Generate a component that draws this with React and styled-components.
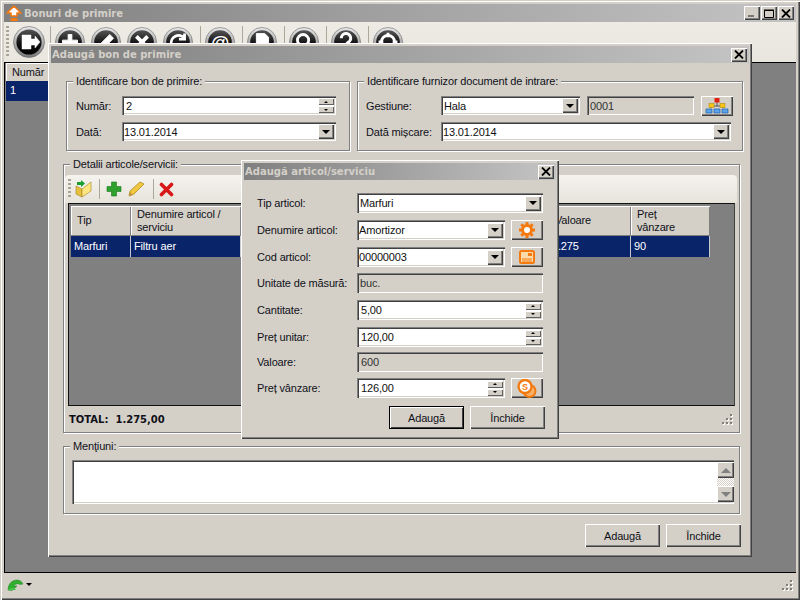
import React from 'react';
import styled, { createGlobalStyle } from 'styled-components';

const Global = createGlobalStyle`
  html, body { margin: 0; padding: 0; background: #d4d0c8; }
  * { box-sizing: border-box; }
  body { font-family: "Liberation Sans", Arial, sans-serif; font-size: 11px; letter-spacing: -0.15px; color: #101018; }
`;

const raised = `box-shadow: inset 1px 1px 0 #fff, inset -1px -1px 0 #404040, inset -2px -2px 0 #808080;`;
const sunken = `box-shadow: inset 1px 1px 0 #808080, inset 2px 2px 0 #404040, inset -1px -1px 0 #fff, inset -2px -2px 0 #d4d0c8;`;

const Shell = styled.div`
  position: relative; width: 800px; height: 600px; overflow: hidden; background: #d4d0c8;
  padding: 4px; display: flex; flex-direction: column;
  box-shadow: inset 1px 1px 0 #d4d0c8, inset 2px 2px 0 #fff, inset -1px -1px 0 #404040, inset -2px -2px 0 #808080;
`;
const TitleBar = styled.div`
  flex: none; height: ${p => p.$h}px; display: flex; align-items: center; padding: 0 2px 0 ${p => p.$pl}px;
  background: linear-gradient(90deg, #808080, #c4c4c4);
`;
const TitleText = styled.div`
  flex: 1; font: bold 10px "DejaVu Sans", sans-serif; letter-spacing: 0; color: #d4d0c8; white-space: nowrap;
`;
const CaptionButton = styled.div`
  width: 16px; height: 14px; flex: none; margin-left: 1px; background: #d4d0c8; ${raised}
  display: flex; align-items: center; justify-content: center;
`;
const Toolbar = styled.div`
  flex: none; height: 40px; display: flex; align-items: center; padding-left: 2px;
  background: linear-gradient(180deg, #eeebe5, #e9e6de);
`;
const Grip = styled.div`
  width: 3px; height: ${p => p.$h}px; flex: none;
  background: repeating-linear-gradient(180deg, #a8a498 0 2px, transparent 2px 4px);
`;
const Sep = styled.div`
  width: 1px; height: ${p => p.$h}px; flex: none; background: #aca899; margin: ${p => p.$m};
`;
const Client = styled.div`
  flex: 1; background: #808080; border-top: 1px solid #000; border-left: 1px solid #000; border-bottom: 1px solid #000;
  padding-left: 1px;
`;
const ListHead = styled.div`
  width: 60px; height: 18px; padding: 3px 0 0 6px; background: #d4d0c8;
  box-shadow: inset 1px 1px 0 #fff;
`;
const ListRow = styled.div`
  width: 60px; height: 20px; padding: 3px 0 0 4px; background: #0a246a; color: #fff;
`;
const StatusBar = styled.div`
  flex: none; height: 23px; display: flex; align-items: center; justify-content: space-between; padding: 0 3px;
`;
const StatusMenu = styled.div`
  display: flex; align-items: center; gap: 2px;
`;
const Dialog = styled.div`
  position: absolute; left: ${p => p.$x}px; top: ${p => p.$y}px; width: ${p => p.$w}px; height: ${p => p.$h}px;
  padding: 3px; background: #d4d0c8; display: flex; flex-direction: column;
  box-shadow: inset 1px 1px 0 #fff, inset -1px -1px 0 #404040, inset -2px -2px 0 #808080;
`;
const TopRow = styled.div`
  display: flex; gap: 7px; margin: 18px 0 0 15px;
`;
const Group = styled.div`
  position: relative; flex: none; width: ${p => p.$w}px; height: ${p => p.$h}px; margin: ${p => p.$m || 0};
  border: 1px solid #808080; padding: ${p => p.$pad};
  box-shadow: inset 1px 1px 0 #fff, 1px 1px 0 #fff;
`;
const Legend = styled.span`
  position: absolute; left: 6px; top: -7px; padding: 0 3px; background: #d4d0c8; white-space: nowrap;
`;
const FormRow = styled.div`
  display: flex; align-items: center; height: 19px; margin-bottom: 7px;
`;
const InlineLabel = styled.div`
  flex: none; width: ${p => p.$w}px; white-space: nowrap;
`;
const Field = styled.div`
  flex: ${p => p.$w ? 'none' : 1}; width: ${p => p.$w ? p.$w + 'px' : 'auto'}; height: 19px; min-width: 0;
  margin-left: ${p => p.$ml || 0}px;
  display: flex; align-items: center; justify-content: space-between;
  background: ${p => p.$ro ? '#d4d0c8' : '#fff'}; color: ${p => p.$ro ? '#333' : '#111'};
  padding: 0 2px 0 ${p => p.$pl ?? 4}px; ${sunken}
`;
const ArrowBtn = styled.div`
  flex: none; width: 16px; height: 15px; background: #d4d0c8; ${raised}
  display: flex; align-items: center; justify-content: center;
`;
const Tri = styled.div`
  width: 0; height: 0; border-left: ${p => p.$s}px solid transparent; border-right: ${p => p.$s}px solid transparent;
  ${p => p.$up ? `border-bottom: ${p.$s}px solid ${p.$c || '#000'};` : `border-top: ${p.$s}px solid ${p.$c || '#000'};`}
`;
const SpinBox = styled.div`
  flex: none; width: 16px; height: 15px; display: flex; flex-direction: column; gap: 1px;
`;
const SpinBtn = styled.div`
  flex: 1; background: #d4d0c8; display: flex; align-items: center; justify-content: center;
  box-shadow: inset 1px 1px 0 #fff, inset -1px -1px 0 #606060;
`;
const IconBtn = styled.div`
  flex: none; width: 32px; height: 20px; margin-left: ${p => p.$ml || 0}px; background: #d4d0c8; ${raised}
  display: flex; align-items: center; justify-content: center;
`;
const InnerBar = styled.div`
  height: 28px; margin: 10px 2px 0 1px; display: flex; align-items: center; padding-left: 3px;
  border-radius: 4px 4px 0 0; background: linear-gradient(180deg, #f5f3ee, #e6e3da);
`;
const GridBox = styled.div`
  height: 203px; margin: 0 4px; background: #808080; padding: 2px 0 0 2px;
  border-top: 1px solid #111; border-left: 1px solid #111; border-right: 1px solid #404040; border-bottom: 1px solid #111;
`;
const GridRow = styled.div`
  display: grid; grid-template-columns: 60px 110px 150px 158px 82px 79px; width: 639px; margin-bottom: 1px;
  height: ${p => p.$h}px;
`;
const HeadCell = styled.div`
  background: #d4d0c8; padding: 0 4px 0 6px; display: flex; align-items: center; line-height: 13px;
  box-shadow: inset 1px 1px 0 #fff, inset -1px 0 0 #808080;
`;
const DataCell = styled.div`
  background: #0a246a; color: #fff; padding: 4px 0 0 3px; border-right: 1px solid #c8c8d0; white-space: nowrap;
`;
const TotalBar = styled.div`
  height: 26px; margin: 0 3px; display: flex; align-items: center; justify-content: space-between;
  padding: 0 3px 0 2px; font: bold 10px "DejaVu Sans", sans-serif; letter-spacing: 0; color: #101018; white-space: pre;
`;
const MemoRow = styled.div`
  height: 44px; margin: 13px 5px 0 8px; display: flex; background: #fff; ${sunken}
`;
const MemoText = styled.div` flex: 1; `;
const ScrollBar = styled.div`
  flex: none; width: 17px; margin: 2px 0; display: flex; flex-direction: column;
  background: repeating-conic-gradient(#d4d0c8 0 25%, #fff 0 50%) 0 0 / 2px 2px;
`;
const ScrollBtn = styled.div`
  height: 16px; background: #d4d0c8; ${raised} display: flex; align-items: center; justify-content: center;
`;
const Spacer = styled.div` flex: 1; `;
const Footer = styled.div`
  display: flex; justify-content: flex-end; gap: 6px; margin: ${p => p.$m};
`;
const Button = styled.div`
  width: 75px; height: 23px; display: flex; align-items: center; justify-content: center; background: #d4d0c8;
  ${p => p.$def
    ? `border: 1px solid #000; box-shadow: inset 1px 1px 0 #fff, inset -1px -1px 0 #404040;`
    : `box-shadow: inset 1px 1px 0 #fff, inset -1px -1px 0 #404040, inset -2px -2px 0 #808080;`}
`;
const ArticleForm = styled.div`
  display: grid; grid-template-columns: 100px 186px; margin: 13px 0 0 13px;
  grid-template-rows: 27px 27px 26px 27px 27px 25px 26px 28px; align-items: start;
`;
const ArticleLabel = styled.div` height: 20px; display: flex; align-items: center; white-space: nowrap; `;
const Cell = styled.div`
  display: flex; justify-content: space-between; align-items: center; height: 20px;
  ${Field} { height: 20px; }
`;

const Sphere = ({ children, size = 30, mx = 3 }) => (
  <svg width={size} height={size} viewBox="0 0 32 32" style={{ flex: 'none', margin: `0 ${mx}px` }}>
    <defs>
      <linearGradient id="ring" x1="0" y1="0" x2="0" y2="1">
        <stop offset="0" stopColor="#e8e8e8" /><stop offset="1" stopColor="#777" />
      </linearGradient>
      <linearGradient id="core" x1="0" y1="0" x2="0" y2="1">
        <stop offset="0" stopColor="#555" /><stop offset=".55" stopColor="#111" /><stop offset="1" stopColor="#000" />
      </linearGradient>
    </defs>
    <circle cx="16" cy="16" r="15.5" fill="url(#ring)" stroke="#666" strokeWidth=".6" />
    <circle cx="16" cy="16" r="12.6" fill="url(#core)" />
    {children}
  </svg>
);

const Close = () => (
  <svg width="10" height="9" viewBox="0 0 10 9"><path d="M1 0.5 9 8.5M9 0.5 1 8.5" stroke="#000" strokeWidth="1.8" /></svg>
);

const Combo = ({ children, w, pl = 3 }) => (
  <Field $w={w} $pl={pl}>{children}<ArrowBtn><Tri $s={4} /></ArrowBtn></Field>
);
const Spin = ({ children, w }) => (
  <Field $w={w}>{children}
    <SpinBox>
      <SpinBtn><Tri $s={2} $up /></SpinBtn>
      <SpinBtn><Tri $s={2} /></SpinBtn>
    </SpinBox>
  </Field>
);

const GearIcon = () => (
  <svg width="18" height="18" viewBox="0 0 18 18">
    <g stroke="#f47a10" strokeWidth="3">
      <path d="M9 1V17M1 9H17M3.3 3.3 14.7 14.7M14.7 3.3 3.3 14.7" />
    </g>
    <circle cx="9" cy="9" r="6" fill="#f47a10" />
    <circle cx="9" cy="9" r="3" fill="#fff" />
  </svg>
);
const CardIcon = () => (
  <svg width="18" height="16" viewBox="0 0 18 16">
    <rect x="1" y="1" width="16" height="14" rx="2.5" fill="#f47a10" />
    <rect x="3" y="3" width="12" height="10" fill="#fbd9a8" />
    <path d="M4 10H14M4 12H14" stroke="#f47a10" />
    <rect x="10" y="4" width="4" height="3" fill="#f47a10" />
  </svg>
);
const CoinIcon = () => (
  <svg width="20" height="19" viewBox="0 0 20 19">
    <circle cx="12.5" cy="12" r="6" fill="#f9b26a" stroke="#f47a10" strokeWidth="2" />
    <circle cx="8" cy="7.5" r="6.5" fill="#fff" stroke="#f47a10" strokeWidth="2.4" />
    <text x="8" y="11" textAnchor="middle" fontSize="9" fontWeight="bold" fill="#f47a10" fontFamily="Liberation Sans">S</text>
  </svg>
);
const OrgIcon = () => (
  <svg width="24" height="16" viewBox="0 0 24 16">
    <path d="M12 3V8M6 8H18M6 8V10M18 8V10" stroke="#555" fill="none" />
    <rect x="9.5" y="0" width="5" height="4.5" fill="#e02010" />
    <rect x="4" y="5.5" width="5" height="4" fill="#f5c518" stroke="#b08000" strokeWidth=".5" />
    <rect x="15" y="5.5" width="5" height="4" fill="#f5c518" stroke="#b08000" strokeWidth=".5" />
    <path d="M1 11H7V15H1ZM9 11H15V15H9ZM17 11H23V15H17Z" fill="#5ba4e6" stroke="#1c5fb0" strokeWidth=".7" />
  </svg>
);
const FolderIcon = () => (
  <svg width="18" height="18" viewBox="0 0 18 18" style={{ margin: '0 6px 0 4px' }}>
    <path d="M1 6 7 9V17L1 14Z" fill="#e8c040" stroke="#a08020" strokeWidth=".6" />
    <path d="M7 9 16 2V11L7 17Z" fill="#ffe680" stroke="#a08020" strokeWidth=".6" />
    <path d="M2 2 6 2 6 0 10 3.5 6 7 6 5 2 5Z" fill="#18a030" />
  </svg>
);
const PlusIcon = () => (
  <svg width="16" height="16" viewBox="0 0 16 16" style={{ margin: '0 6px' }}>
    <path d="M5.5 1H10.5V5.5H15V10.5H10.5V15H5.5V10.5H1V5.5H5.5Z" fill="#2ea02e" stroke="#1a7a1a" strokeWidth=".6" />
  </svg>
);
const PencilIcon = () => (
  <svg width="17" height="16" viewBox="0 0 17 16" style={{ marginRight: 8 }}>
    <path d="M1 15 2 10 12 1 16 3 6 13Z" fill="#f0c840" stroke="#b08a20" strokeWidth=".8" />
    <path d="M1 15 2 11 5 14Z" fill="#c09040" />
  </svg>
);
const RedX = () => (
  <svg width="15" height="15" viewBox="0 0 15 15" style={{ margin: '0 0 0 5px' }}>
    <path d="M2.5 2.5 12.5 12.5M12.5 2.5 2.5 12.5" stroke="#d81818" strokeWidth="3.6" strokeLinecap="round" />
  </svg>
);
const GreenArrow = () => (
  <svg width="17" height="12" viewBox="0 0 17 12">
    <path d="M1 11C1 5 5 1 10 1C13 1 15 3 16 5L13 5.5C11 4 8 5 7 7L10 7 5 11.5Z" fill="#2fae2f" stroke="#1c801c" strokeWidth=".5" />
    <path d="M1 11C4 8 8 9 9 11Z" fill="#46c846" />
  </svg>
);
const Dots = () => (
  <svg width="12" height="12" viewBox="0 0 12 12">
    {[[9, 1], [5, 5], [9, 5], [1, 9], [5, 9], [9, 9]].map(([x, y]) => (
      <g key={`${x}${y}`}>
        <rect x={x + 1} y={y + 1} width="2" height="2" fill="#fff" />
        <rect x={x} y={y} width="2" height="2" fill="#808078" />
      </g>
    ))}
  </svg>
);

export default function App() {
  const w = { fill: '#fff', stroke: '#fff' };
  return (
    <>
      <Global />
      <Shell>
        <TitleBar $h={18} $pl={2}>
          <svg width="16" height="17" viewBox="0 0 16 17" style={{ flex: 'none', marginRight: 2 }}>
            <path d="M8 1 15 8H11V11H5V8H1Z" fill="#fff" stroke="#f47a10" strokeWidth="1.6" strokeLinejoin="round" />
            <path d="M4.5 13H11.5V16H4.5Z" fill="#f47a10" />
          </svg>
          <TitleText>Bonuri de primire</TitleText>
          <CaptionButton><svg width="8" height="8" viewBox="0 0 8 8"><path d="M0 7H6" stroke="#777" strokeWidth="2" /></svg></CaptionButton>
          <CaptionButton><svg width="10" height="9" viewBox="0 0 10 9"><path d="M.5 1.5H9.5V8.5H.5Z" fill="none" stroke="#000" /><path d="M0 1H10" stroke="#000" /></svg></CaptionButton>
          <CaptionButton><Close /></CaptionButton>
        </TitleBar>
        <Toolbar>
          <Grip $h={32} />
          <Sphere size={32} mx={4}>
            <path d="M9 9H18V13H22V10L27 16 22 22V19H18V23H9Z" {...w} strokeWidth=".5" />
          </Sphere>
          <Sep $h={32} $m="0 1px" />
          <Sphere><path d="M14 8H18V14H24V18H18V24H14V18H8V14H14Z" {...w} /></Sphere>
          <Sphere><path d="M9 23 11 17 20 8 24 12 15 21Z" {...w} /></Sphere>
          <Sphere><path d="M10 10 22 22M22 10 10 22" stroke="#fff" strokeWidth="4" /></Sphere>
          <Sphere><path d="M9 19A8 8 0 0 1 23 12M23 7V13H17" fill="none" stroke="#fff" strokeWidth="3" /></Sphere>
          <Sep $h={32} $m="0 1px 0 4px" />
          <Sphere><text x="16" y="23" textAnchor="middle" fontSize="20" fontWeight="bold" fill="#fff" fontFamily="Liberation Sans">@</text></Sphere>
          <Sep $h={32} $m="0 1px 0 4px" />
          <Sphere><path d="M10 7H19L23 11V25H10Z" {...w} /></Sphere>
          <Sep $h={32} $m="0 1px 0 4px" />
          <Sphere><circle cx="15" cy="14" r="6" fill="none" stroke="#fff" strokeWidth="3" /><path d="M19 19 24 24" stroke="#fff" strokeWidth="3" /></Sphere>
          <Sep $h={32} $m="0 1px 0 4px" />
          <Sphere><path d="M11 12A5 5 0 1 1 18 16.5C16.5 17.5 16 18 16 20M16 22V25" fill="none" stroke="#fff" strokeWidth="3.2" /></Sphere>
          <Sep $h={32} $m="0 1px 0 4px" />
          <Sphere><circle cx="16" cy="16" r="7" fill="none" stroke="#fff" strokeWidth="3" /><path d="M16 6V11M16 21V26M6 16H11M21 16H26" stroke="#fff" strokeWidth="3" /></Sphere>
        </Toolbar>
        <Client>
          <ListHead>Număr</ListHead>
          <ListRow>1</ListRow>
        </Client>
        <StatusBar>
          <StatusMenu>
            <GreenArrow />
            <Tri $s={3} />
          </StatusMenu>
          <Dots />
        </StatusBar>

        <Dialog $x={48} $y={43} $w={704} $h={514}>
          <TitleBar $h={17} $pl={1}>
            <TitleText>Adaugă bon de primire</TitleText>
            <CaptionButton><Close /></CaptionButton>
          </TitleBar>
          <TopRow>
            <Group $w={284} $h={70} $pad="14px 13px 0 9px">
              <Legend>Identificare bon de primire:</Legend>
              <FormRow><InlineLabel $w={46}>Număr:</InlineLabel><Spin>2</Spin></FormRow>
              <FormRow><InlineLabel $w={46}>Dată:</InlineLabel><Combo pl={2}>13.01.2014</Combo></FormRow>
            </Group>
            <Group $w={386} $h={70} $pad="14px 10px 0 8px">
              <Legend>Identificare furnizor document de intrare:</Legend>
              <FormRow>
                <InlineLabel $w={75}>Gestiune:</InlineLabel>
                <Combo w={139}>Hala</Combo>
                <Field $ro $w={107} $pl={3} $ml={7}>0001</Field>
                <IconBtn $ml={7}><OrgIcon /></IconBtn>
              </FormRow>
              <FormRow>
                <InlineLabel $w={75}>Dată mișcare:</InlineLabel>
                <Combo w={290} pl={2}>13.01.2014</Combo>
              </FormRow>
            </Group>
          </TopRow>
          <Group $w={677} $h={269} $m="13px 0 0 12px">
            <Legend>Detalii articole/servicii:</Legend>
            <InnerBar>
              <Grip $h={20} />
              <FolderIcon />
              <Sep $h={20} />
              <PlusIcon />
              <PencilIcon />
              <Sep $h={20} />
              <RedX />
            </InnerBar>
            <GridBox>
              <GridRow $h={29}>
                <HeadCell>Tip</HeadCell>
                <HeadCell>Denumire articol / serviciu</HeadCell>
                <HeadCell>Cantitate</HeadCell>
                <HeadCell>Preț unitar</HeadCell>
                <HeadCell>Valoare</HeadCell>
                <HeadCell>Preț<br />vânzare</HeadCell>
              </GridRow>
              <GridRow $h={21}>
                <DataCell>Marfuri</DataCell>
                <DataCell>Filtru aer</DataCell>
                <DataCell>5</DataCell>
                <DataCell>255</DataCell>
                <DataCell>1.275</DataCell>
                <DataCell>90</DataCell>
              </GridRow>
            </GridBox>
            <TotalBar>TOTAL:  1.275,00<Dots /></TotalBar>
          </Group>
          <Group $w={677} $h={68} $m="13px 0 0 12px">
            <Legend>Menţiuni:</Legend>
            <MemoRow>
              <MemoText />
              <ScrollBar>
                <ScrollBtn><Tri $s={5} $up $c="#808080" /></ScrollBtn>
                <Spacer />
                <ScrollBtn><Tri $s={5} $c="#808080" /></ScrollBtn>
              </ScrollBar>
            </MemoRow>
          </Group>
          <Footer $m="10px 8px 0 0">
            <Button>Adaugă</Button>
            <Button>Închide</Button>
          </Footer>
        </Dialog>

        <Dialog $x={241} $y={160} $w={318} $h={279}>
          <TitleBar $h={17} $pl={1}>
            <TitleText>Adaugă articol/serviciu</TitleText>
            <CaptionButton><Close /></CaptionButton>
          </TitleBar>
          <ArticleForm>
            <ArticleLabel>Tip articol:</ArticleLabel>
            <Cell><Combo w={186}>Marfuri</Combo></Cell>
            <ArticleLabel>Denumire articol:</ArticleLabel>
            <Cell><Combo w={148} pl={2}>Amortizor</Combo><IconBtn><GearIcon /></IconBtn></Cell>
            <ArticleLabel>Cod articol:</ArticleLabel>
            <Cell><Combo w={148} pl={2}>00000003</Combo><IconBtn><CardIcon /></IconBtn></Cell>
            <ArticleLabel>Unitate de măsură:</ArticleLabel>
            <Cell><Field $ro $w={186} $pl={3}>buc.</Field></Cell>
            <ArticleLabel>Cantitate:</ArticleLabel>
            <Cell><Spin w={186}>5,00</Spin></Cell>
            <ArticleLabel>Preț unitar:</ArticleLabel>
            <Cell><Spin w={186}>120,00</Spin></Cell>
            <ArticleLabel>Valoare:</ArticleLabel>
            <Cell><Field $ro $w={186}>600</Field></Cell>
            <ArticleLabel>Preț vânzare:</ArticleLabel>
            <Cell><Spin w={148}>126,00</Spin><IconBtn><CoinIcon /></IconBtn></Cell>
          </ArticleForm>
          <Footer $m="0 11px 0 0">
            <Button $def>Adaugă</Button>
            <Button>Închide</Button>
          </Footer>
        </Dialog>
      </Shell>
    </>
  );
}
